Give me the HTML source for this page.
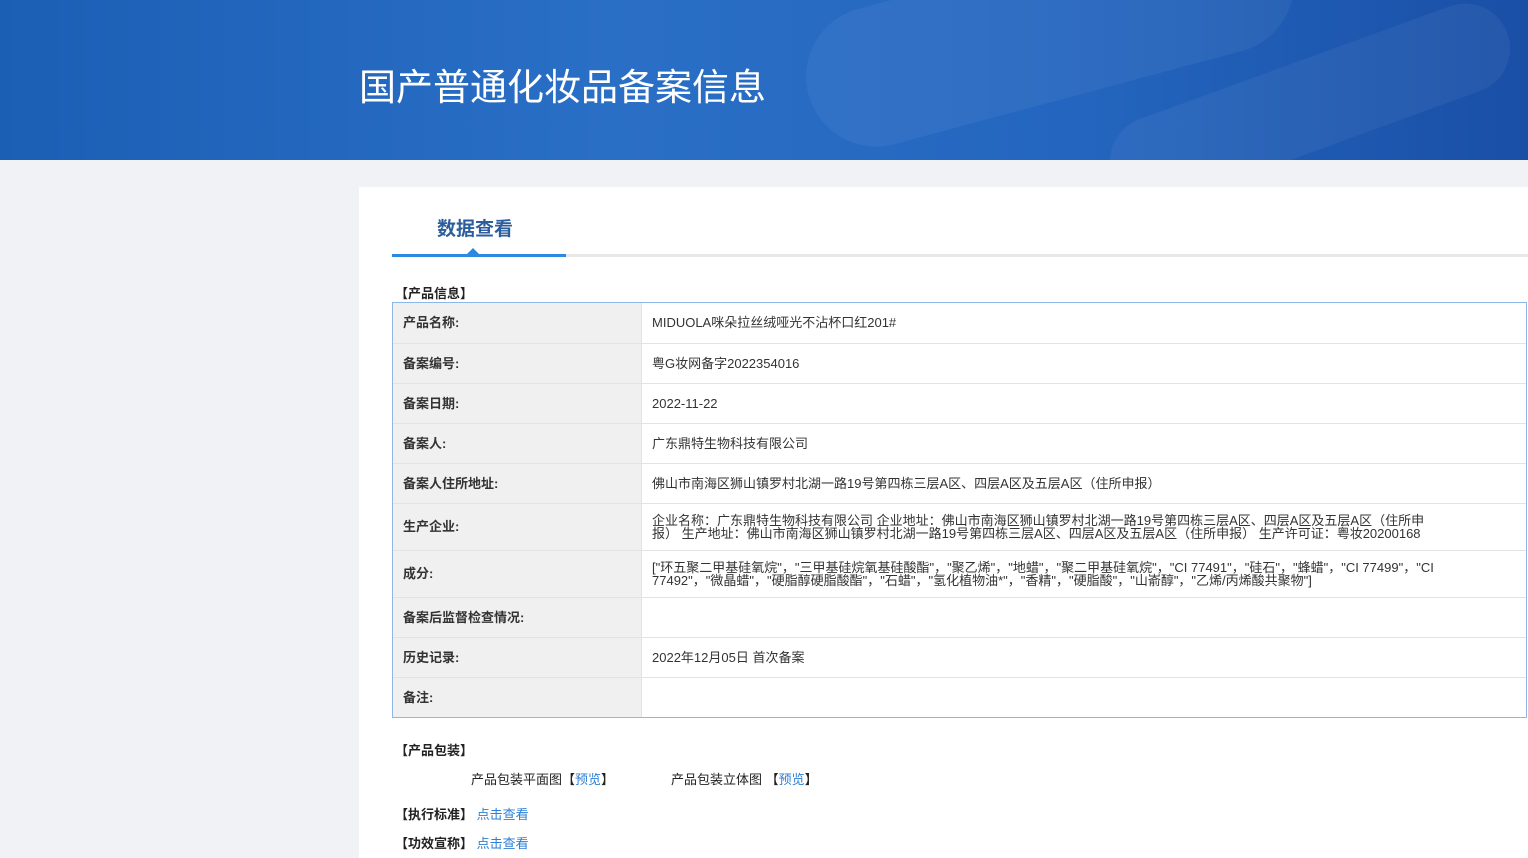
<!DOCTYPE html><html><head><meta charset="utf-8"><style>
body{margin:0;width:1528px;height:858px;overflow:hidden;background:#f0f2f5;font-family:"Liberation Sans","Noto Sans CJK SC",sans-serif;position:relative}
.hd{position:absolute;left:0;top:0;width:1528px;height:160px;background:linear-gradient(90deg,#1b5fb5 0%,#2a6fc6 40%,#2466bf 70%,#1a4fa6 100%);overflow:hidden}
.hd h1{position:absolute;left:359px;top:63px;margin:0;font-size:37px;font-weight:normal;color:#fff;line-height:50px}
.panel{position:absolute;left:359px;top:187px;width:1169px;height:671px;background:#fff}
.tab{position:absolute;left:78px;top:27px;font-size:19px;font-weight:bold;color:#2c5d9c}
.line{position:absolute;left:33px;top:67px;width:1136px;height:3px;background:#e8e8e8}
.line2{position:absolute;left:33px;top:67px;width:174px;height:3px;background:#2b8ae0}
.tri{position:absolute;left:108px;top:61px;width:0;height:0;border-left:6px solid transparent;border-right:6px solid transparent;border-bottom:6px solid #2b8ae0}
.sec{position:absolute;font-size:13px;font-weight:bold;color:#222}
.tw{position:absolute;left:33px;top:115px;width:1133px;border:1px solid #8fb6e8}
table{width:100%;border-collapse:collapse;font-size:13px;color:#333}
td{border:1px solid #e3e3e3;padding:0 10px;line-height:13px}
tr:first-child td{border-top:0}tr:last-child td{border-bottom:0}td:first-child{border-left:0}td:last-child{border-right:0}
td.l{background:#f0f0f0;font-weight:bold;width:228px;color:#333}
a{color:#2b7fd6;text-decoration:none}
.t{position:absolute;font-size:13px;color:#222}
</style></head><body>
<div class="hd">
<div style="position:absolute;left:800px;top:-40px;width:500px;height:140px;border-radius:70px;background:rgba(255,255,255,0.05);transform:rotate(-15deg)"></div>
<div style="position:absolute;left:1100px;top:60px;width:420px;height:90px;border-radius:45px;background:rgba(255,255,255,0.05);transform:rotate(-20deg)"></div>
<h1>国产普通化妆品备案信息</h1></div>
<div class="panel">
<div class="tab">数据查看</div>
<div class="line"></div><div class="line2"></div><div class="tri"></div>
<div class="sec" style="left:36px;top:96px">【产品信息】</div>
<div class="tw"><table>
<tr style="height:40px"><td class="l">产品名称:</td><td>MIDUOLA咪朵拉丝绒哑光不沾杯口红201#</td></tr>
<tr style="height:40px"><td class="l">备案编号:</td><td>粤G妆网备字2022354016</td></tr>
<tr style="height:40px"><td class="l">备案日期:</td><td>2022-11-22</td></tr>
<tr style="height:40px"><td class="l">备案人:</td><td>广东鼎特生物科技有限公司</td></tr>
<tr style="height:40px"><td class="l">备案人住所地址:</td><td>佛山市南海区狮山镇罗村北湖一路19号第四栋三层A区、四层A区及五层A区（住所申报）</td></tr>
<tr style="height:47px"><td class="l">生产企业:</td><td style="padding-right:85px">企业名称：广东鼎特生物科技有限公司 企业地址：佛山市南海区狮山镇罗村北湖一路19号第四栋三层A区、四层A区及五层A区（住所申报） 生产地址：佛山市南海区狮山镇罗村北湖一路19号第四栋三层A区、四层A区及五层A区（住所申报） 生产许可证：粤妆20200168</td></tr>
<tr style="height:47px"><td class="l">成分:</td><td style="padding-right:85px">["环五聚二甲基硅氧烷"，"三甲基硅烷氧基硅酸酯"，"聚乙烯"，"地蜡"，"聚二甲基硅氧烷"，"CI 77491"，"硅石"，"蜂蜡"，"CI 77499"，"CI 77492"，"微晶蜡"，"硬脂醇硬脂酸酯"，"石蜡"，"氢化植物油*"，"香精"，"硬脂酸"，"山嵛醇"，"乙烯/丙烯酸共聚物"]</td></tr>
<tr style="height:40px"><td class="l">备案后监督检查情况:</td><td></td></tr>
<tr style="height:40px"><td class="l">历史记录:</td><td>2022年12月05日 首次备案</td></tr>
<tr style="height:40px"><td class="l">备注:</td><td></td></tr>
</table></div>
<div class="sec" style="left:36px;top:553px">【产品包装】</div>
<div class="t" style="left:112px;top:582px">产品包装平面图【<a>预览</a>】</div>
<div class="t" style="left:312px;top:582px">产品包装立体图 【<a>预览</a>】</div>
<div class="sec" style="left:36px;top:617px">【执行标准】 <a style="font-weight:normal">点击查看</a></div>
<div class="sec" style="left:36px;top:646px">【功效宣称】 <a style="font-weight:normal">点击查看</a></div>
</div>
</body></html>
